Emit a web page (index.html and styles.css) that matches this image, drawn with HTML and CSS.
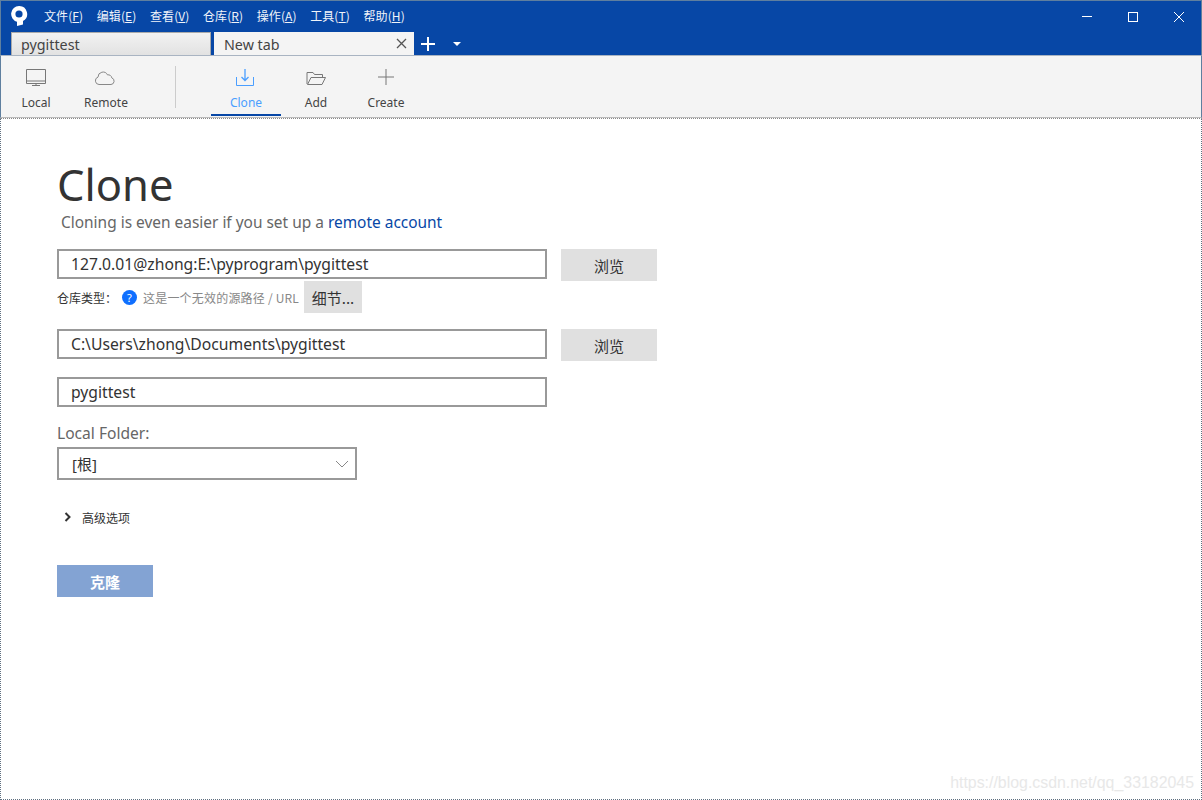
FILE: index.html
```html
<!DOCTYPE html>
<html lang="zh">
<head>
<meta charset="utf-8">
<title>Sourcetree</title>
<link rel="stylesheet" href="styles.css">
</head>
<body>
<div class="window">
  <header class="titlebar">
    <svg class="logo" width="18" height="20" viewBox="0 0 18 20"><path fill="#fff" d="M9 0a8 8 0 0 1 4 15v3.500L7 20v-4.300A8 8 0 0 1 9 0z"/><circle cx="9" cy="8" r="3.600" fill="#0747a6"/></svg>
    <nav class="menu">
      <span>文件(<u>F</u>)</span><span>编辑(<u>E</u>)</span><span>查看(<u>V</u>)</span><span>仓库(<u>R</u>)</span><span>操作(<u>A</u>)</span><span>工具(<u>T</u>)</span><span>帮助(<u>H</u>)</span>
    </nav>
    <div class="winctl">
      <svg width="46" height="31" viewBox="-1 0 46 31"><path d="M18 15.500h10" stroke="#fff" fill="none"/></svg>
      <svg width="46" height="31" viewBox="-1 0 46 31"><rect x="18.500" y="11.500" width="9" height="9" stroke="#fff" fill="none"/></svg>
      <svg width="46" height="31" viewBox="-1 0 46 31"><path d="M18 11l10 10M28 11L18 21" stroke="#fff" fill="none"/></svg>
    </div>
  </header>
  <div class="tabbar">
    <div class="tab tab-off">pygittest</div>
    <div class="tab tab-on"><span class="tab-label">New tab</span>
      <svg width="11" height="11" viewBox="0 0 11 11"><path d="M1 1l9 9M10 1L1 10" stroke="#555" stroke-width="1.300" fill="none"/></svg>
    </div>
    <svg class="tab-plus" width="16" height="16" viewBox="0 0 16 16"><path d="M8 1v14M1 8h14" stroke="#fff" stroke-width="2" fill="none"/></svg>
    <svg class="tab-more" width="8" height="4" viewBox="0 0 8 4"><path d="M0 0h8L4 4z" fill="#fff"/></svg>
  </div>
  <div class="toolbar">
    <div class="tool">
      <svg width="22" height="20" viewBox="0 0 22 20"><path d="M2.500 2.500h19v14h-19zM2.500 14h19M8 18.500h8M12 16.500v2" transform="translate(-1 -1)" stroke="#777" fill="none"/></svg>
      <span>Local</span>
    </div>
    <div class="tool">
      <svg width="22" height="20" viewBox="1 0 22 20"><path d="M5 16.500a3.800 3.800 0 0 1-1-7.400 5 5 0 0 1 9.500-2.200 3.500 3.500 0 0 1 4.300 3 3.400 3.400 0 0 1-.8 6.600z" stroke="#888" fill="none"/></svg>
      <span>Remote</span>
    </div>
    <div class="sep"></div>
    <div class="tool tool-active">
      <svg width="22" height="20" viewBox="1 0 22 20"><path d="M2.500 9v8.500h17V9" stroke="#4a9eff" fill="none"/><path d="M11 1v11M7.500 9l3.500 3.500L14.500 9" stroke="#4a9eff" stroke-width="1.300" fill="none"/></svg>
      <span>Clone</span>
    </div>
    <div class="tool">
      <svg width="22" height="20" viewBox="0 0 22 20"><path d="M2 16V4.500h6l1.500 2h8V9M2.500 16.500h14.500l3.500-7H6z" stroke="#777" fill="none"/></svg>
      <span>Add</span>
    </div>
    <div class="tool">
      <svg width="22" height="20" viewBox="0 1 22 20"><path d="M11 2v16M3 10h16" stroke="#777" fill="none"/></svg>
      <span>Create</span>
    </div>
  </div>
  <main class="content">
    <h1 class="title">Clone</h1>
    <p class="subtitle">Cloning is even easier if you set up a <a class="link">remote account</a></p>
    <div class="row">
      <div class="field">127.0.01@zhong:E:\pyprogram\pygittest</div>
      <div class="btn btn-browse">浏览</div>
    </div>
    <div class="repo-type">
      <span class="repo-label">仓库类型：</span>
      <span class="help">?</span>
      <span class="repo-msg">这是一个无效的源路径 / URL</span>
      <div class="btn btn-detail">细节...</div>
    </div>
    <div class="row row-dest">
      <div class="field">C:\Users\zhong\Documents\pygittest</div>
      <div class="btn btn-browse">浏览</div>
    </div>
    <div class="field field-name">pygittest</div>
    <div class="folder-label">Local Folder:</div>
    <div class="select">
      <span>[根]</span>
      <svg width="14" height="8" viewBox="0 0 14 8"><path d="M1 1l6 6 6-6" stroke="#888" fill="none"/></svg>
    </div>
    <div class="advanced">
      <svg width="7" height="10" viewBox="0 0 7 10"><path d="M1.500 1l4 4-4 4" stroke="#333" stroke-width="2" fill="none"/></svg>
      <span>高级选项</span>
    </div>
    <div class="btn-clone">克隆</div>
  </main>
  <div class="watermark">https://blog.csdn.net/qq_33182045</div>
</div>
</body>
</html>
```
FILE: styles.css
```css
* { box-sizing: border-box; }
html, body { margin: 0; padding: 0; }
body {
  width: 1202px;
  height: 800px;
  overflow: hidden;
  font-family: "Noto Sans", "Noto Sans CJK SC", sans-serif;
  background: #fff;
}
.window {
  position: relative;
  width: 1202px;
  height: 800px;
  display: flex;
  flex-direction: column;
  background: #fff;
}
.titlebar {
  height: 32px;
  background: #0747a6;
  border: 1px solid #5f7f9f;
  border-bottom: 0;
  display: flex;
  align-items: center;
  color: #fff;
  flex: none;
}
.logo { margin-left: 9px; margin-top: -2px; }
.menu {
  display: flex;
  gap: 13.500px;
  margin-left: 16px;
  margin-top: -2px;
  font-size: 12px;
  letter-spacing: 0.1px;
  color: #f0f4fa;
  font-family: "Noto Sans CJK SC", sans-serif;
}
.winctl { margin-left: auto; display: flex; }
.tabbar {
  height: 23px;
  background: #0747a6;
  border-left: 1px solid #5f7f9f;
  border-right: 1px solid #5f7f9f;
  display: flex;
  align-items: flex-end;
  padding-left: 10px;
  flex: none;
}
.tab {
  width: 200px;
  height: 23px;
  font-size: 14.300px;
  line-height: 24px;
  color: #444;
  padding-left: 9px;
}
.tab-off {
  background: linear-gradient(#f2f2f2, #e2e2e2);
  border: 1px solid #aaa;
  border-bottom: 0;
}
.tab-on {
  margin-left: 3px;
  padding-left: 10px;
  background: #f4f4f4;
  display: flex;
  align-items: center;
  justify-content: space-between;
  padding-right: 7px;
}
.tab-label { margin-top: 2px; }
.tab-plus { margin: 0 0 3px 6px; }
.tab-more { margin: 0 0 9px 17px; }
.toolbar {
  height: 63px;
  background: #f4f4f4;
  border-top: 1px solid #a9b4c2;
  border-left: 1px solid #5f7f9f;
  border-right: 1px solid #5f7f9f;
  border-bottom: 1px solid #bbb;
  display: flex;
  align-items: flex-start;
  flex: none;
}
.tool {
  width: 70px;
  height: 60px;
  display: flex;
  flex-direction: column;
  align-items: center;
  padding-top: 12px;
  font-size: 12px;
  color: #444;
}
.tool svg { flex: none; }
.tool span { margin-top: 7px; line-height: 16px; }
.tool-active { color: #4a9eff; border-bottom: 2px solid #0747a6; }
.sep {
  width: 1px;
  height: 42px;
  margin: 10px 35px 0 34px;
  background: #ccc;
}
.content {
  flex: 1;
  padding: 35px 0 0 56px;
  color: #333;
  border: 1px dotted #607080;
  border-top: 1px dotted #888;
}
.title {
  margin: 0;
  font-size: 43.500px;
  font-weight: 400;
  line-height: 60px;
  color: #333;
}
.subtitle {
  margin: -2px 0 17px 4px;
  font-size: 15.450px;
  line-height: 20px;
  color: #666;
}
.link { color: #0747a6; }
.row { display: flex; gap: 14px; align-items: flex-start; }
.field {
  width: 490px;
  height: 30px;
  border: 2px solid #999;
  background: #fff;
  font-size: 15.700px;
  line-height: 26px;
  padding-left: 12px;
  color: #333;
}
.btn {
  background: #e0e0e0;
  color: #333;
  font-size: 15px;
  font-family: "Noto Sans CJK SC", sans-serif;
  display: flex;
  align-items: center;
  justify-content: center;
}
.btn-browse { width: 96px; height: 32px; }
.repo-type {
  display: flex;
  align-items: center;
  height: 32px;
  font-family: "Noto Sans CJK SC", sans-serif;
}
.repo-label { font-size: 12px; color: #333; width: 65px; white-space: nowrap; }
.help {
  width: 15px;
  height: 15px;
  border-radius: 50%;
  background: #0f6fff;
  color: #fff;
  font-size: 11px;
  line-height: 15px;
  text-align: center;
  font-family: "Noto Sans", sans-serif;
}
.repo-msg { font-size: 12px; letter-spacing: 0.2px; color: #888; margin-left: 6px; width: 161px; white-space: nowrap; }
.btn-detail { width: 58px; height: 32px; }
.row-dest { margin-top: 16px; }
.field-name { margin-top: 16px; }
.folder-label { margin-top: 16px; font-size: 15.600px; line-height: 20px; color: #666; }
.select {
  margin-top: 4px;
  width: 300px;
  height: 33px;
  border: 2px solid #999;
  display: flex;
  align-items: center;
  justify-content: space-between;
  padding: 0 6px 0 13px;
  font-size: 15px;
  color: #333;
}
.advanced {
  margin: 28px 0 0 7px;
  display: flex;
  align-items: center;
  gap: 11px;
  height: 18px;
  font-size: 12px;
  color: #333;
  font-family: "Noto Sans CJK SC", sans-serif;
}
.btn-clone {
  margin-top: 39px;
  width: 96px;
  height: 32px;
  background: #83a3d3;
  color: #fff;
  font-size: 15px;
  font-weight: 700;
  display: flex;
  align-items: center;
  justify-content: center;
  font-family: "Noto Sans CJK SC", sans-serif;
}
.watermark {
  position: absolute;
  right: 8px;
  bottom: 8px;
  font-family: "Liberation Sans", sans-serif;
  font-size: 15.900px;
  line-height: 18px;
  color: #e8e8e8;
}
```
